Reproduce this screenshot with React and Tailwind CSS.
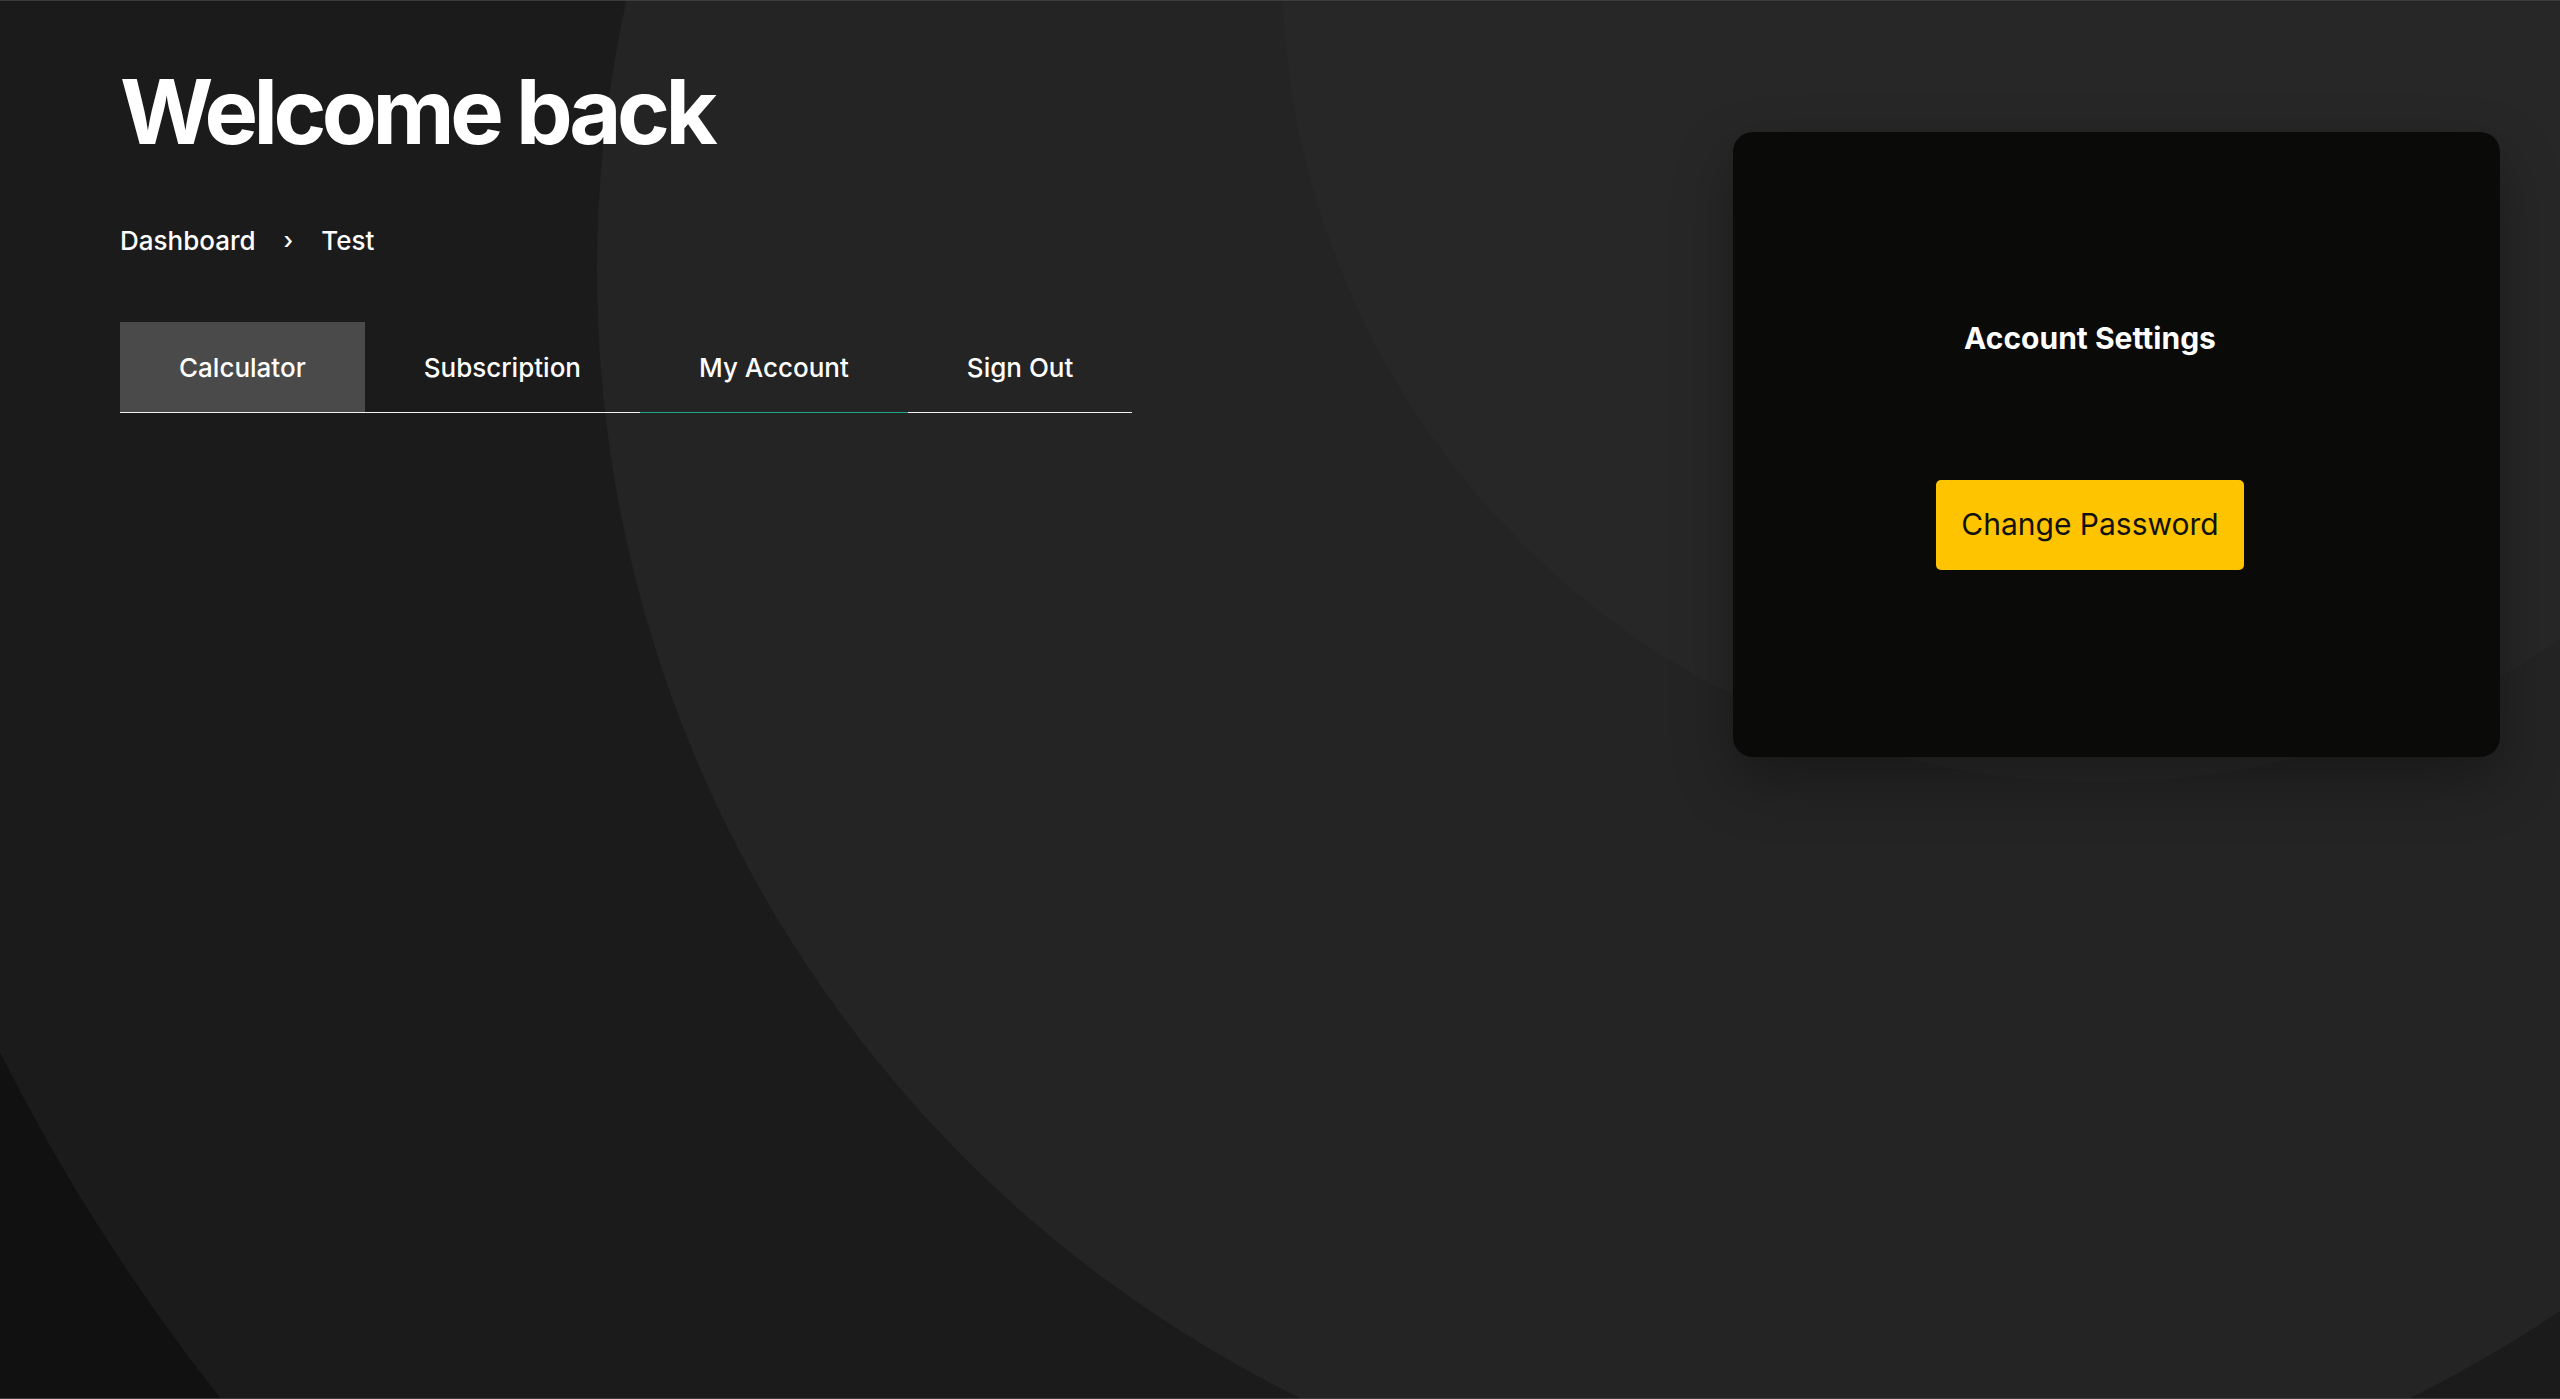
import React from "react";

function Background() {
  return (
    <svg
      className="absolute inset-0 h-full w-full"
      width="2560"
      height="1399"
      viewBox="0 0 2560 1399"
      preserveAspectRatio="none"
      aria-hidden="true"
    >
      <rect x="0" y="0" width="2560" height="1399" fill="#111111" />
      <circle cx="1798" cy="152" r="2011" fill="#1b1b1b" />
      <circle cx="1855" cy="270" r="1258" fill="#242424" />
      <circle cx="2099" cy="-35" r="817" fill="#272727" />
    </svg>
  );
}

const tabs = [
  { label: "Calculator", bg: true, line: "border-[#f2f2f2]" },
  { label: "Subscription", bg: false, line: "border-[#f2f2f2]" },
  { label: "My Account", bg: false, line: "border-[#1fa589]" },
  { label: "Sign Out", bg: false, line: "border-[#f2f2f2]" },
];

export default function App() {
  return (
    <div className="relative h-[1399px] w-full overflow-hidden border-t border-b border-[#3d3d3d] font-[Inter,sans-serif] text-white">
      <Background />
      <div className="relative flex w-full items-start justify-between pl-[120px] pr-[60px]">
        <div className="flex flex-col pt-[66px]">
          <h1 className="text-[90px] font-bold leading-none tracking-[-0.05em] text-white">
            Welcome back
          </h1>
          <nav className="mt-[64px] flex items-center gap-[28px] text-[26px] font-medium leading-[39px]">
            <span>Dashboard</span>
            <span className="text-[24px]">›</span>
            <span>Test</span>
          </nav>
          <div className="mt-[62px] flex">
            {tabs.map((t) => (
              <div
                key={t.label}
                className={`flex h-[91px] items-center border-b px-[59px] text-[26px] font-medium ${t.line} ${
                  t.bg ? "bg-[#4a4a4a]" : ""
                }`}
              >
                {t.label}
              </div>
            ))}
          </div>
        </div>
        <div className="mt-[131px] flex h-[625px] w-[767px] flex-col items-center justify-center rounded-[20px] bg-[#0a0a09] pr-[53px] shadow-[0_25px_60px_rgba(0,0,0,0.3)]">
          <h2 className="text-[30px] font-bold leading-[36px] text-white">Account Settings</h2>
          <button className="mt-[124px] flex h-[90px] items-center rounded-[5px] bg-[#ffc400] px-[25px] text-[30px] font-normal text-[#111]">
            Change Password
          </button>
        </div>
      </div>
    </div>
  );
}
